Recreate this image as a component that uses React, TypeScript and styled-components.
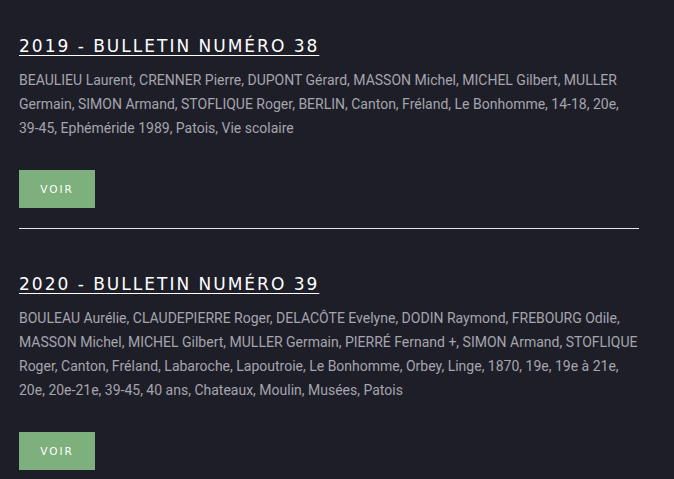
import React from "react";
import styled, { createGlobalStyle } from "styled-components";

const Global = createGlobalStyle`
  html, body { margin: 0; padding: 0; background: #1e1e29; }
  body { font-family: Roboto, "Liberation Sans", sans-serif; }
`;

const Page = styled.main`
  width: 620px;
  padding: 34px 0 0 19px;
  background: #1e1e29;
  min-height: 479px;
  box-sizing: content-box;
`;

const Entry = styled.article<{ $last?: boolean }>`
  display: flex;
  flex-direction: column;
  align-items: flex-start;
  padding-bottom: ${(p) => (p.$last ? "0" : "20px")};
  border-bottom: ${(p) => (p.$last ? "none" : "1px solid #e6e6e6")};
  margin-bottom: ${(p) => (p.$last ? "0" : "43px")};
`;

const Title = styled.h2`
  margin: 0;
  font-family: "DejaVu Sans", sans-serif;
  font-weight: 400;
  font-size: 17px;
  line-height: 24px;
  letter-spacing: 2px;
  color: #ffffff;
  text-decoration: underline;
  text-underline-offset: 3px;
  text-decoration-thickness: 1px;
`;

const Keywords = styled.p`
  margin: 10px 0 0;
  font-size: 14px;
  line-height: 24px;
  color: #a5a5ad;
`;

const Button = styled.a`
  display: flex;
  align-items: center;
  justify-content: center;
  margin-top: 30px;
  width: 76px;
  height: 38px;
  background: #7db07c;
  color: #ffffff;
  font-family: "DejaVu Sans", sans-serif;
  font-size: 10.5px;
  letter-spacing: 2px;
  text-decoration: none;
`;

const entries = [
  {
    title: "2019 - BULLETIN NUMÉRO 38",
    text:
      "BEAULIEU Laurent, CRENNER Pierre, DUPONT Gérard, MASSON Michel, MICHEL Gilbert, MULLER Germain, SIMON Armand, STOFLIQUE Roger, BERLIN, Canton, Fréland, Le Bonhomme, 14-18, 20e, 39-45, Ephéméride 1989, Patois, Vie scolaire",
  },
  {
    title: "2020 - BULLETIN NUMÉRO 39",
    text:
      "BOULEAU Aurélie, CLAUDEPIERRE Roger, DELACÔTE Evelyne, DODIN Raymond, FREBOURG Odile, MASSON Michel, MICHEL Gilbert, MULLER Germain, PIERRÉ Fernand +, SIMON Armand, STOFLIQUE Roger, Canton, Fréland, Labaroche, Lapoutroie, Le Bonhomme, Orbey, Linge, 1870, 19e, 19e à 21e, 20e, 20e-21e, 39-45, 40 ans, Chateaux, Moulin, Musées, Patois",
  },
];

export default function App() {
  return (
    <>
      <Global />
      <Page>
        {entries.map((e, i) => (
          <Entry key={e.title} $last={i === entries.length - 1}>
            <Title>{e.title}</Title>
            <Keywords>{e.text}</Keywords>
            <Button href="#">VOIR</Button>
          </Entry>
        ))}
      </Page>
    </>
  );
}
